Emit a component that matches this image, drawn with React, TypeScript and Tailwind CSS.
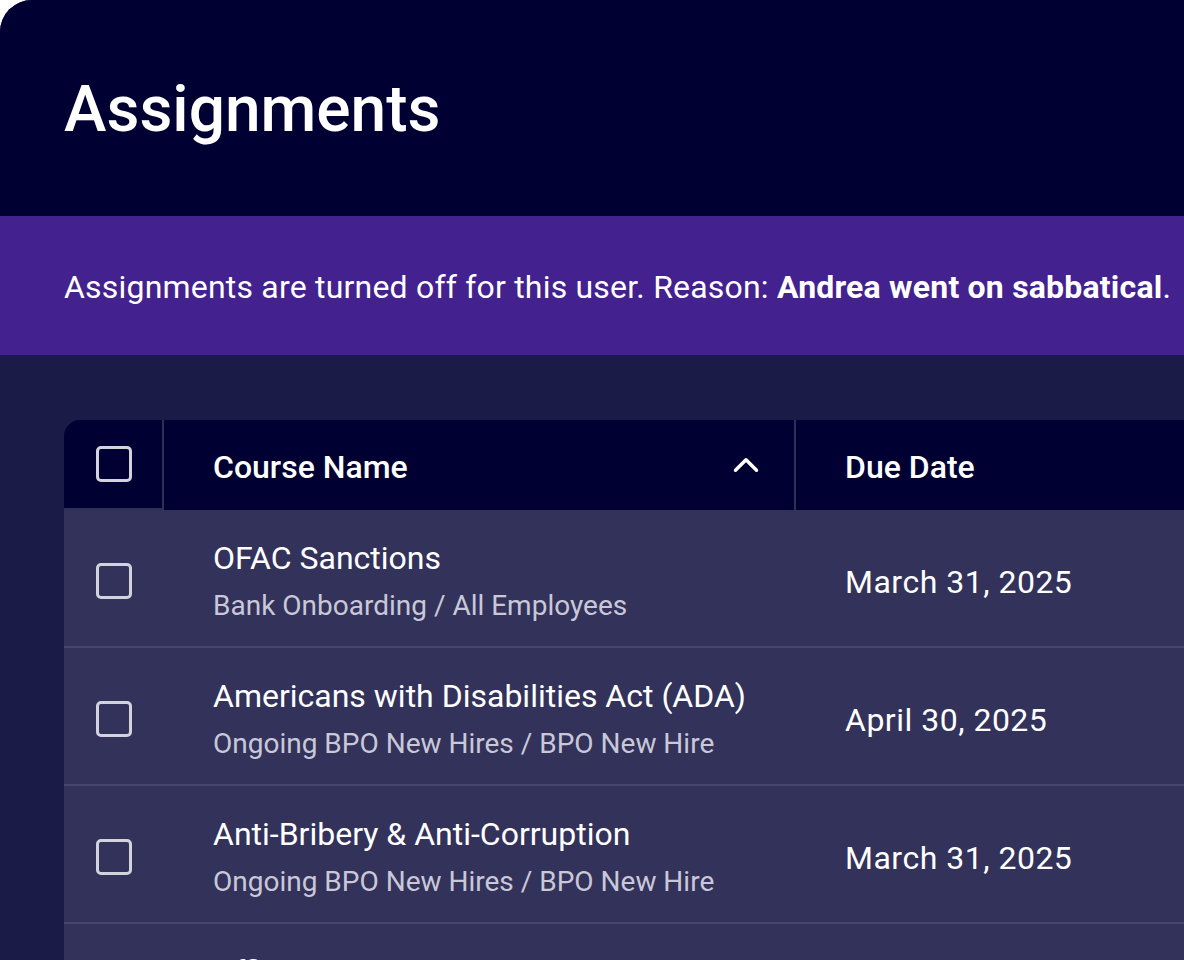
import React from 'react';
import { ChevronUp } from 'lucide-react';

const rows = [
  { title: 'OFAC Sanctions', path: 'Bank Onboarding / All Employees', due: 'March 31, 2025' },
  { title: 'Americans with Disabilities Act (ADA)', path: 'Ongoing BPO New Hires / BPO New Hire', due: 'April 30, 2025' },
  { title: 'Anti-Bribery & Anti-Corruption', path: 'Ongoing BPO New Hires / BPO New Hire', due: 'March 31, 2025' },
  { title: 'Affiliate Partner Training Toolkit', path: 'Partner Network / All Partners', due: 'May 15, 2025' },
];

const Checkbox: React.FC = () => (
  <div className="w-9 h-9 shrink-0 rounded-[5px] border-[3px] border-[#d3d3dd]" />
);

const App: React.FC = () => {
  return (
    <div className="min-h-screen bg-white font-['Roboto','Noto_Sans',sans-serif] text-white overflow-hidden">
      <div className="min-h-screen rounded-tl-[32px] overflow-hidden bg-[#1b1b48]">
        {/* Page header */}
        <header className="h-[216px] bg-[#000033] px-16 pt-[78px]">
          <h1 className="text-[64px] leading-none font-medium">Assignments</h1>
        </header>

        {/* Notice banner */}
        <div className="h-[139px] bg-[#43218f] px-16 pt-[55px]">
          <p className="text-[32px] leading-none tracking-[0.2px] whitespace-nowrap">
            Assignments are turned off for this user. Reason: <span className="font-bold">Andrea went on sabbatical</span>.
          </p>
        </div>

        {/* Table */}
        <div className="pl-16 pt-[65px]">
          <div className="w-[1400px] rounded-tl-2xl overflow-hidden">
            <div className="flex h-[90px] bg-[#000033]">
              <div className="w-[100px] shrink-0 flex items-center pl-8 border-r-2 border-b-2 border-[#2f2e57]">
                <Checkbox />
              </div>
              <div className="w-[632px] shrink-0 flex items-start justify-between pl-[49px] pr-[27px] pt-[31px] border-r-2 border-[#2f2e57]">
                <span className="text-[32px] leading-none font-medium">Course Name</span>
                <ChevronUp size={42} strokeWidth={2} className="text-white -mt-[7px]" />
              </div>
              <div className="flex-1 pl-[49px] pt-[31px]">
                <span className="text-[32px] leading-none font-medium">Due Date</span>
              </div>
            </div>

            {rows.map((row) => (
              <div key={row.title} className="flex h-[138px] bg-[#33325a] border-b-2 border-[#46456c]">
                <div className="w-[100px] shrink-0 pl-8 pt-[53px]">
                  <Checkbox />
                </div>
                <div className="w-[632px] shrink-0 pl-[49px] pt-[32px]">
                  <div className="text-[32px] leading-none whitespace-nowrap">{row.title}</div>
                  <div className="mt-[18px] text-[28px] leading-none text-[#c9c8d9] whitespace-nowrap">{row.path}</div>
                </div>
                <div className="flex-1 pl-[49px] pt-[56px]">
                  <span className="text-[32px] leading-none tracking-[0.5px] whitespace-nowrap">{row.due}</span>
                </div>
              </div>
            ))}
          </div>
        </div>
      </div>
    </div>
  );
};

export default App;
